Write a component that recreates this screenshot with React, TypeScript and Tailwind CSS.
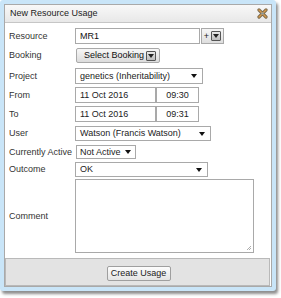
import React from "react";

function Tri({ className = "" }: { className?: string }) {
  return (
    <svg width="6" height="4" viewBox="0 0 6 4" className={className}>
      <path d="M0 0H6L3 4Z" fill="#111" />
    </svg>
  );
}

function BoxArrow() {
  return (
    <span className="inline-flex items-center justify-center w-[10px] h-[10px] border border-[#555] bg-gradient-to-b from-[#e8e8e8] to-[#bdbdbd] rounded-[1px]">
      <svg width="6" height="4" viewBox="0 0 6 4">
        <path d="M0 0H6L3 4Z" fill="#222" />
      </svg>
    </span>
  );
}

function CloseIcon() {
  return (
    <svg width="11" height="11" viewBox="0 0 11 11">
      <path d="M2 2L9 9M9 2L2 9" stroke="#7a6a4e" strokeWidth="3.2" strokeLinecap="round" />
      <path d="M2 2L9 9M9 2L2 9" stroke="#d89a4a" strokeWidth="1.4" strokeLinecap="round" />
      <circle cx="5.5" cy="5.5" r="1.3" fill="#8a9aa0" />
    </svg>
  );
}

function Select({ w, h, text, pad = "pl-[4px] pr-[5px]" }: { w: string; h: string; text: string; pad?: string }) {
  return (
    <div className={`${w} ${h} ${pad} border border-[#a9a9a9] bg-white flex items-center justify-between gap-[3px] text-[#222] whitespace-nowrap`}>
      <span>{text}</span>
      <Tri />
    </div>
  );
}

function Row({ label, mt, h, children }: { label: string; mt: string; h: string; children: React.ReactNode }) {
  return (
    <div className={`flex items-center ${mt} ${h}`}>
      <div className="w-[70px] pl-[4px] shrink-0 whitespace-nowrap">{label}</div>
      {children}
    </div>
  );
}

export default function App() {
  return (
    <div className="w-[281px] h-[298px] bg-white font-['Liberation_Sans',Arial,sans-serif] text-[9px] leading-none text-[#333]">
      <div className="w-[276px] h-[291px] bg-[#c9e5f8] rounded-[3px] shadow-[2px_3px_3px_rgba(0,0,0,0.45)] p-[4px]">
        <div className="h-full border border-[#a9a9a9] bg-white flex flex-col">
          <div className="h-[18px] shrink-0 flex items-center justify-between pl-[5px] pr-[3px] bg-gradient-to-b from-[#f8f8f8] to-[#e8e8e8] border-b border-[#c6c6c6]">
            <span className="text-[#222]">New Resource Usage</span>
            <CloseIcon />
          </div>

          <Row label="Resource" mt="mt-[5px]" h="h-[16px]">
            <div className="w-[125px] h-[16px] border border-[#a9a9a9] bg-white flex items-center pl-[4px] text-[#111]">MR1</div>
            <div className="ml-[1px] w-[23px] h-[16px] border border-[#a9a9a9] bg-gradient-to-b from-[#f6f6f6] to-[#dedede] flex items-center justify-end gap-[2px] pr-[2px] text-[#222]">
              <span>+</span>
              <BoxArrow />
            </div>
          </Row>

          <Row label="Booking" mt="mt-[4px]" h="h-[15px]">
            <div className="ml-[1px] w-[84px] h-[15px] border border-[#a9a9a9] rounded-[2px] bg-gradient-to-b from-[#f8f8f8] to-[#dcdcdc] flex items-center justify-end gap-[2px] pr-[3px] text-[#111]">
              <span>Select Booking</span>
              <BoxArrow />
            </div>
          </Row>

          <Row label="Project" mt="mt-[5px]" h="h-[16px]">
            <Select w="w-[128px]" h="h-[16px]" text="genetics (Inheritability)" />
          </Row>

          <Row label="From" mt="mt-[3px]" h="h-[16px]">
            <div className="w-[81px] h-[16px] border border-[#a9a9a9] bg-white flex items-center pl-[4px] text-[#222]">11 Oct 2016</div>
            <div className="w-[43px] h-[16px] border border-[#a9a9a9] bg-white flex items-center justify-center text-[#222]">09:30</div>
          </Row>

          <Row label="To" mt="mt-[3px]" h="h-[16px]">
            <div className="w-[81px] h-[16px] border border-[#a9a9a9] bg-white flex items-center pl-[4px] text-[#222]">11 Oct 2016</div>
            <div className="w-[43px] h-[16px] border border-[#a9a9a9] bg-white flex items-center justify-center text-[#222]">09:31</div>
          </Row>

          <Row label="User" mt="mt-[4px]" h="h-[15px]">
            <Select w="w-[136px]" h="h-[15px]" text="Watson (Francis Watson)" />
          </Row>

          <Row label="Currently Active" mt="mt-[4px]" h="h-[14px]">
            <div className="ml-[1px]">
              <Select w="w-[60px]" h="h-[14px]" text="Not Active" pad="pl-[3px] pr-[4px]" />
            </div>
          </Row>

          <Row label="Outcome" mt="mt-[3px]" h="h-[15px]">
            <Select w="w-[133px]" h="h-[15px]" text="OK" />
          </Row>

          <Row label="Comment" mt="mt-[2px]" h="h-[74px]">
            <div className="relative w-[179px] h-[74px] border border-[#a9a9a9] bg-white">
              <svg width="6" height="6" viewBox="0 0 6 6" className="absolute right-[1px] bottom-[1px]">
                <path d="M1 5L5 1M3 5L5 3" stroke="#999" strokeWidth="0.8" />
              </svg>
            </div>
          </Row>

          <div className="mt-[5px] mr-[1px] h-[28px] border border-[#b9b9b9] bg-[#e3e3e3] flex items-center justify-center pt-[2px]">
            <div className="ml-[2px] w-[64px] h-[15px] border border-[#9f9f9f] rounded-[2px] bg-gradient-to-b from-[#fdfdfd] to-[#e4e4e4] flex items-center justify-center text-[#222]">
              Create Usage
            </div>
          </div>
        </div>
      </div>
    </div>
  );
}
